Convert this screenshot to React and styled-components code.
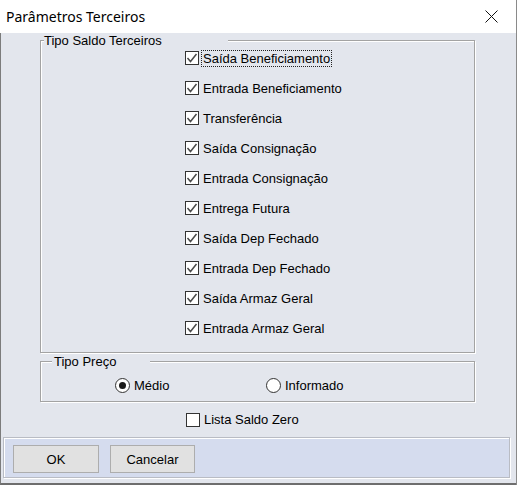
import React from "react";
import styled, { createGlobalStyle } from "styled-components";

const GlobalStyle = createGlobalStyle`
  html, body {
    margin: 0;
    padding: 0;
    background: #e3e6ed;
  }
  body {
    font-family: "Liberation Sans", Arial, sans-serif;
    font-size: 13px;
    color: #000;
  }
  * {
    box-sizing: border-box;
  }
`;

const Window = styled.div`
  width: 517px;
  height: 485px;
  display: flex;
  flex-direction: column;
  background: #e3e6ed;
  border-right: 1px solid #8a8a8a;
`;

const TitleBar = styled.div`
  height: 33px;
  flex-shrink: 0;
  display: flex;
  align-items: center;
  justify-content: space-between;
  background: #fff;
  padding-left: 6px;
  font-family: "Noto Sans", "Open Sans", sans-serif;
  font-size: 14px;
`;

const CloseButton = styled.div`
  width: 46px;
  height: 33px;
  display: flex;
  align-items: center;
  justify-content: center;
  padding-right: 4px;
  padding-bottom: 1px;
`;

const Body = styled.div`
  flex: 1;
  display: flex;
  flex-direction: column;
  border-left: 1px solid #7c7c7c;
  border-bottom: 2px solid #6e6e6e;
`;

const Content = styled.div`
  display: flex;
  flex-direction: column;
  padding: 7px 0 0 39px;
`;

const Frame = styled.div`
  width: 435px;
  display: flex;
  flex-direction: column;
  border: 1px solid #a3a3a3;
  border-top: none;
  box-shadow: inset 1px 0 0 #fff, 1px 1px 0 #fff;
  margin-top: ${(p) => p.$top || 0}px;
`;

const FrameHead = styled.div`
  display: flex;
  align-items: flex-start;
  height: 1px;
`;

const HeadLine = styled.div`
  height: 0;
  border-top: 1px solid #a3a3a3;
  box-shadow: 0 1px 0 #fff;
  ${(p) => (p.$width ? `width: ${p.$width}px; flex-shrink: 0;` : "flex: 1;")}
`;

const Caption = styled.div`
  width: ${(p) => p.$width}px;
  flex-shrink: 0;
  margin-top: -6px;
  padding-left: ${(p) => p.$pad || 0}px;
  line-height: 14px;
  white-space: nowrap;
`;

const CheckList = styled.div`
  display: flex;
  flex-direction: column;
  gap: 14px;
  padding: 9px 0 16px 144px;
`;

const CheckRow = styled.label`
  height: 16px;
  display: flex;
  align-items: center;
  gap: 3px;
`;

const Box = styled.span`
  width: 14px;
  height: 14px;
  flex-shrink: 0;
  display: flex;
  align-items: center;
  justify-content: center;
  background: #fff;
  border: 1px solid #333;
`;

const Label = styled.span`
  padding: 0 1px;
  line-height: 15px;
  white-space: nowrap;
  outline: ${(p) => (p.$focused ? "1px dotted #222" : "none")};
`;

const RadioRow = styled.div`
  display: grid;
  grid-template-columns: 151px auto;
  padding: 15px 0 8px 74px;
`;

const RadioOption = styled.label`
  height: 16px;
  display: flex;
  align-items: center;
  gap: 4px;
`;

const Circle = styled.span`
  width: 15px;
  height: 15px;
  border-radius: 50%;
  border: 1px solid #333;
  background: #fff;
  display: flex;
  align-items: center;
  justify-content: center;

  &::after {
    content: "";
    width: 7px;
    height: 7px;
    border-radius: 50%;
    background: ${(p) => (p.$checked ? "#1a1a1a" : "transparent")};
  }
`;

const ZeroRow = styled(CheckRow)`
  height: 15px;
  margin: 10px 0 0 146px;
`;

const Footer = styled.div`
  height: 41px;
  margin: 10px 6px 0 2px;
  display: flex;
  align-items: flex-start;
  gap: 11px;
  padding: 7px 0 0 9px;
  background: #d5dcee;
  border: 1px solid #b9bcc4;
  box-shadow: inset 1px 1px 0 #fff, 1px 1px 0 #fff;
`;

const Button = styled.button`
  width: ${(p) => p.$width}px;
  height: 28px;
  font-family: "Liberation Sans", Arial, sans-serif;
  font-size: 13px;
  color: #000;
  background: #e1e1e1;
  border: 1px solid #adadad;
  padding: 0;
`;

const Check = () => (
  <svg width="12" height="12" viewBox="0 0 12 12">
    <polyline
      points="1.5,6 4.5,9.5 10.5,2"
      fill="none"
      stroke="#4a4a4a"
      strokeWidth="1.5"
    />
  </svg>
);

const CheckBox = ({ checked, focused, children, as: Row = CheckRow }) => (
  <Row>
    <Box>{checked && <Check />}</Box>
    <Label $focused={focused}>{children}</Label>
  </Row>
);

const saldos = [
  "Saída Beneficiamento",
  "Entrada Beneficiamento",
  "Transferência",
  "Saída Consignação",
  "Entrada Consignação",
  "Entrega Futura",
  "Saída Dep Fechado",
  "Entrada Dep Fechado",
  "Saída Armaz Geral",
  "Entrada Armaz Geral",
];

export default function App() {
  return (
    <>
      <GlobalStyle />
      <Window>
        <TitleBar>
          <span>Parâmetros Terceiros</span>
          <CloseButton>
            <svg width="13" height="13" viewBox="0 0 13 13">
              <path d="M0.5 0.5 L12.5 12.5 M12.5 0.5 L0.5 12.5" stroke="#111" strokeWidth="1" />
            </svg>
          </CloseButton>
        </TitleBar>
        <Body>
          <Content>
            <Frame>
              <FrameHead>
                <HeadLine $width={3} />
                <Caption $width={184}>Tipo Saldo Terceiros</Caption>
                <HeadLine />
              </FrameHead>
              <CheckList>
                {saldos.map((s, i) => (
                  <CheckBox key={s} checked focused={i === 0}>
                    {s}
                  </CheckBox>
                ))}
              </CheckList>
            </Frame>

            <Frame $top={8}>
              <FrameHead>
                <HeadLine $width={11} />
                <Caption $width={98} $pad={2}>Tipo Preço</Caption>
                <HeadLine />
              </FrameHead>
              <RadioRow>
                <RadioOption>
                  <Circle $checked />
                  <span>Médio</span>
                </RadioOption>
                <RadioOption>
                  <Circle />
                  <span>Informado</span>
                </RadioOption>
              </RadioRow>
            </Frame>

            <CheckBox as={ZeroRow}>Lista Saldo Zero</CheckBox>
          </Content>

          <Footer>
            <Button $width={86}>OK</Button>
            <Button $width={85}>Cancelar</Button>
          </Footer>
        </Body>
      </Window>
    </>
  );
}
